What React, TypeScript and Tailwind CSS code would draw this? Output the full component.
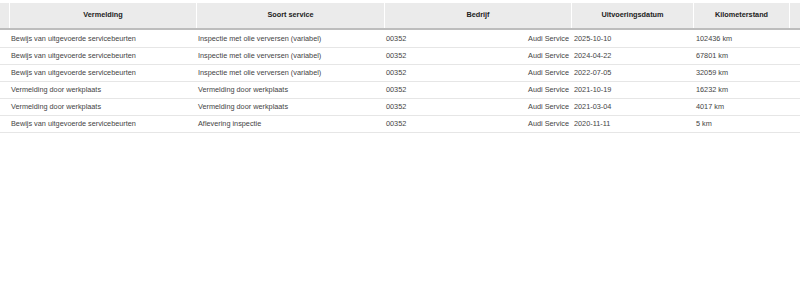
import React from "react";

const rows = [
  ["Bewijs van uitgevoerde servicebeurten", "Inspectie met olie verversen (variabel)", "00352", "Audi Service", "2025-10-10", "102436 km"],
  ["Bewijs van uitgevoerde servicebeurten", "Inspectie met olie verversen (variabel)", "00352", "Audi Service", "2024-04-22", "67801 km"],
  ["Bewijs van uitgevoerde servicebeurten", "Inspectie met olie verversen (variabel)", "00352", "Audi Service", "2022-07-05", "32059 km"],
  ["Vermelding door werkplaats", "Vermelding door werkplaats", "00352", "Audi Service", "2021-10-19", "16232 km"],
  ["Vermelding door werkplaats", "Vermelding door werkplaats", "00352", "Audi Service", "2021-03-04", "4017 km"],
  ["Bewijs van uitgevoerde servicebeurten", "Aflevering inspectie", "00352", "Audi Service", "2020-11-11", "5 km"],
];

const grid = "grid grid-cols-[9px_187px_188px_187px_122px_96px_1fr]";

export default function App() {
  return (
    <div
      className="w-[800px] h-[289px] bg-white pt-[3px]"
      style={{ fontFamily: '"Liberation Sans", Arial, sans-serif' }}
    >
      <div className={`${grid} h-[27px] bg-[#ebebeb] border-b-2 border-[#bdbdbd] text-[7.3px] font-bold text-[#222]`}>
        <div />
        <div className="border-l border-white flex items-center justify-center">Vermelding</div>
        <div className="border-l border-white flex items-center justify-center">Soort service</div>
        <div className="border-l border-white flex items-center justify-center">Bedrijf</div>
        <div className="border-l border-white flex items-center justify-center">Uitvoeringsdatum</div>
        <div className="border-l border-white flex items-center justify-center">Kilometerstand</div>
        <div className="border-l border-white" />
      </div>
      <div className="mt-[1px] text-[7.3px] text-[#444]">
        {rows.map((r, i) => (
          <div key={i} className={`${grid} h-[17px] border-b border-[#e6e6e6] items-center`}>
            <div />
            <div className="pl-[2px] whitespace-nowrap overflow-hidden">{r[0]}</div>
            <div className="pl-[2px] whitespace-nowrap overflow-hidden">{r[1]}</div>
            <div className="pl-[2px] pr-[2px] flex justify-between whitespace-nowrap">
              <span>{r[2]}</span>
              <span>{r[3]}</span>
            </div>
            <div className="pl-[3px] whitespace-nowrap">{r[4]}</div>
            <div className="pl-[3px] whitespace-nowrap">{r[5]}</div>
            <div />
          </div>
        ))}
      </div>
    </div>
  );
}
